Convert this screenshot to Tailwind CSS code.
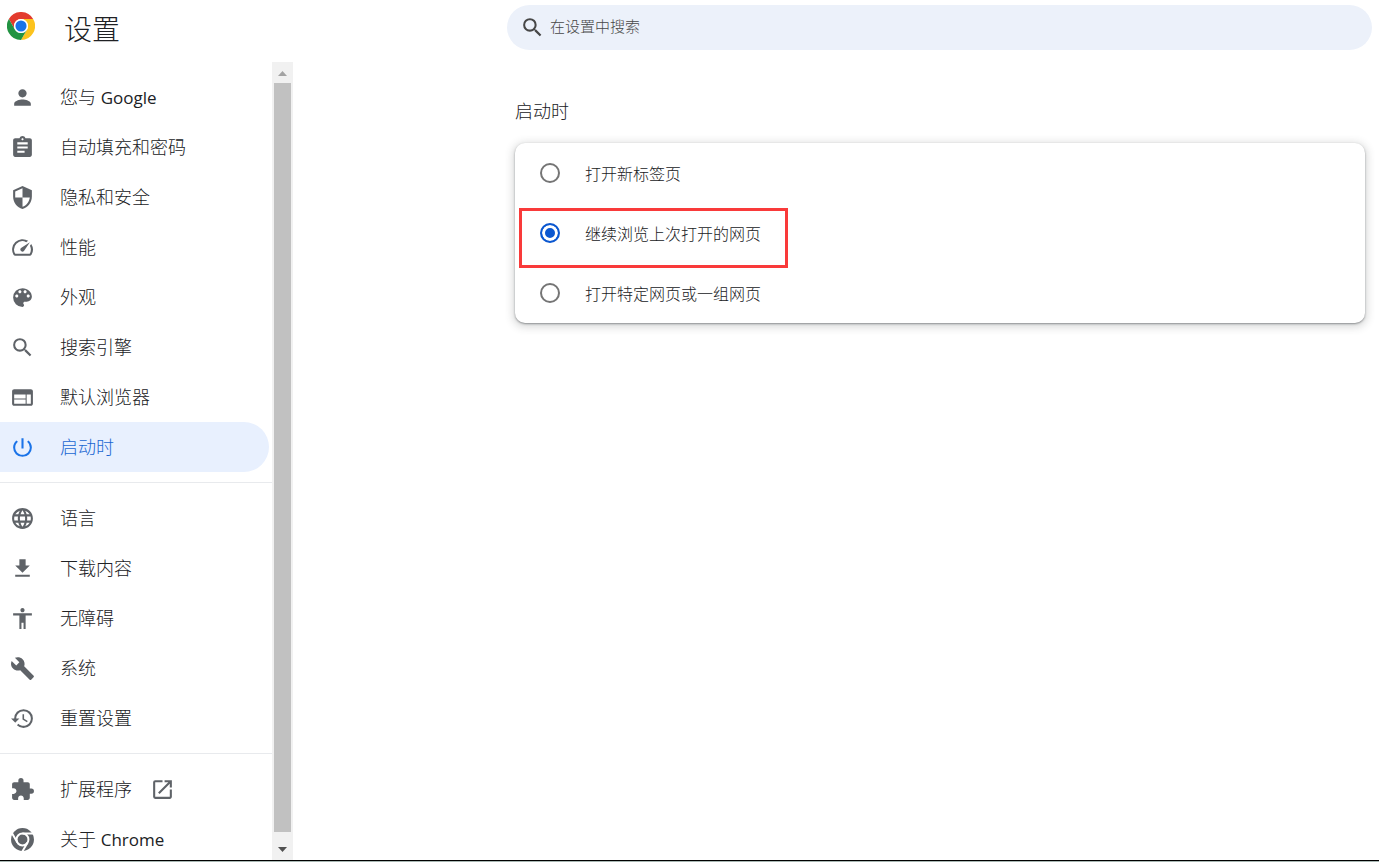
<!DOCTYPE html>
<html lang="zh-CN">
  <head>
    <meta charset="utf-8" />
    <meta name="viewport" content="width=device-width, initial-scale=1" />
    <title>设置</title>
    <script src="https://cdn.jsdelivr.net/npm/@tailwindcss/browser@4"></script>
  </head>
  <body>
    <div
      class="flex h-screen flex-col overflow-hidden bg-white font-['Open_Sans','Noto_Sans_CJK_SC',sans-serif] font-light text-[#202124]"
    >
      <header class="flex h-[62px] shrink-0 items-start pr-[7px]">
        <div class="flex w-[507px] shrink-0 items-center gap-[29px] pl-[7px]">
          <svg class="size-7 -mt-1.5" viewBox="0 0 48 48">
            <path fill="#e33b2e" d="M24 12h20.8A24 24 0 0 0 3.2 12l10.4 18A12 12 0 0 1 24 12z" />
            <path fill="#fcc31e" d="M34.4 30 24 48a24 24 0 0 0 20.8-36H24a12 12 0 0 1 10.4 18z" />
            <path fill="#229342" d="M13.6 30 3.2 12A24 24 0 0 0 24 48l10.4-18a12 12 0 0 1-20.8 0z" />
            <circle cx="24" cy="24" r="12" fill="#fff" />
            <circle cx="24" cy="24" r="9.5" fill="#1a73e8" />
          </svg>
          <h1 class="text-[28px] leading-[58px]">设置</h1>
        </div>
        <label
          class="mt-[5px] flex h-[45px] flex-1 items-center gap-[5px] rounded-full bg-[#ecf1fa] pl-[13px] text-[#474747]"
        >
          <svg class="size-[25px] shrink-0" viewBox="0 0 24 24" fill="currentColor">
            <path d="M15.5 14h-.79l-.28-.27A6.471 6.471 0 0 0 16 9.5 6.5 6.5 0 1 0 9.5 16c1.61 0 3.09-.59 4.23-1.57l.27.28v.79l5 4.99L20.49 19l-4.99-5zm-6 0C7.01 14 5 11.99 5 9.5S7.01 5 9.5 5 14 7.01 14 9.5 11.99 14 9.5 14z" />
          </svg>
          <input
            type="search"
            aria-label="在设置中搜索"
            placeholder="在设置中搜索"
            class="h-full flex-1 bg-transparent pb-1 text-[15px] outline-none placeholder:text-[#474747]"
          />
        </label>
      </header>

      <div class="flex min-h-0 flex-1">
        <aside class="flex w-[293px] shrink-0">
          <nav class="flex-1 overflow-hidden pt-[10px] text-lg text-[#202124]">
            <a href="#people" class="flex h-[50px] items-center gap-[25px] pl-[10px]">
              <svg class="size-[25px] text-[#5f6368]" viewBox="0 0 24 24" fill="currentColor">
                <path d="M12 12c2.21 0 4-1.79 4-4s-1.79-4-4-4-4 1.79-4 4 1.79 4 4 4zm0 2c-2.67 0-8 1.34-8 4v2h16v-2c0-2.66-5.33-4-8-4z" />
              </svg>
              <span>您与 <span class="text-[17px] font-medium">Google</span></span>
            </a>
            <a href="#autofill" class="flex h-[50px] items-center gap-[25px] pl-[10px]">
              <svg class="size-[25px] text-[#5f6368]" viewBox="0 0 24 24" fill="currentColor">
                <path d="M19 3h-4.18C14.4 1.84 13.3 1 12 1c-1.3 0-2.4.84-2.82 2H5c-1.1 0-2 .9-2 2v14c0 1.1.9 2 2 2h14c1.1 0 2-.9 2-2V5c0-1.1-.9-2-2-2zm-7 0c.55 0 1 .45 1 1s-.45 1-1 1-1-.45-1-1 .45-1 1-1zm2 14H7v-2h7v2zm3-4H7v-2h10v2zm0-4H7V7h10v2z" />
              </svg>
              <span>自动填充和密码</span>
            </a>
            <a href="#privacy" class="flex h-[50px] items-center gap-[25px] pl-[10px]">
              <svg class="size-[25px] text-[#5f6368]" viewBox="0 0 24 24" fill="currentColor">
                <path d="M12 1 3 5v6c0 5.55 3.84 10.74 9 12 5.16-1.26 9-6.45 9-12V5l-9-4zm0 10.99h7c-.53 4.12-3.28 7.79-7 8.94V12H5V6.3l7-3.11v8.8z" />
              </svg>
              <span>隐私和安全</span>
            </a>
            <a href="#performance" class="flex h-[50px] items-center gap-[25px] pl-[10px]">
              <svg class="size-[25px] text-[#5f6368]" viewBox="0 0 24 24" fill="currentColor">
                <path d="m20.38 8.57-1.23 1.85a8 8 0 0 1-.22 7.58H5.07A8 8 0 0 1 15.58 6.85l1.85-1.23A10 10 0 0 0 3.35 19a2 2 0 0 0 1.72 1h13.85a2 2 0 0 0 1.74-1 10 10 0 0 0-.27-10.44zm-9.79 6.84a2 2 0 0 0 2.83 0l5.66-8.49-8.49 5.66a2 2 0 0 0 0 2.83z" />
              </svg>
              <span>性能</span>
            </a>
            <a href="#appearance" class="flex h-[50px] items-center gap-[25px] pl-[10px]">
              <svg class="size-[25px] text-[#5f6368]" viewBox="0 0 24 24" fill="currentColor">
                <path d="M12 3a9 9 0 0 0 0 18c.83 0 1.5-.67 1.5-1.5 0-.39-.15-.74-.39-1.01-.23-.26-.38-.61-.38-.99 0-.83.67-1.5 1.5-1.5H16c2.76 0 5-2.24 5-5 0-4.42-4.03-8-9-8zm-5.5 9c-.83 0-1.5-.67-1.5-1.5S5.67 9 6.5 9 8 9.67 8 10.5 7.33 12 6.5 12zm3-4C8.67 8 8 7.33 8 6.5S8.67 5 9.5 5s1.5.67 1.5 1.5S10.33 8 9.5 8zm5 0c-.83 0-1.5-.67-1.5-1.5S13.67 5 14.5 5s1.5.67 1.5 1.5S15.33 8 14.5 8zm3 4c-.83 0-1.5-.67-1.5-1.5S16.67 9 17.5 9s1.5.67 1.5 1.5-.67 1.5-1.5 1.5z" />
              </svg>
              <span>外观</span>
            </a>
            <a href="#search" class="flex h-[50px] items-center gap-[25px] pl-[10px]">
              <svg class="size-[25px] text-[#5f6368]" viewBox="0 0 24 24" fill="currentColor">
                <path d="M15.5 14h-.79l-.28-.27A6.471 6.471 0 0 0 16 9.5 6.5 6.5 0 1 0 9.5 16c1.61 0 3.09-.59 4.23-1.57l.27.28v.79l5 4.99L20.49 19l-4.99-5zm-6 0C7.01 14 5 11.99 5 9.5S7.01 5 9.5 5 14 7.01 14 9.5 11.99 14 9.5 14z" />
              </svg>
              <span>搜索引擎</span>
            </a>
            <a href="#defaultBrowser" class="flex h-[50px] items-center gap-[25px] pl-[10px]">
              <svg class="size-[25px] text-[#5f6368]" viewBox="0 0 24 24" fill="currentColor">
                <path d="M20 4H4c-1.1 0-1.99.9-1.99 2L2 18c0 1.1.9 2 2 2h16c1.1 0 2-.9 2-2V6c0-1.1-.9-2-2-2zm-5 14H4v-4h11v4zm0-5H4V9h11v4zm5 5h-4V9h4v9z" />
              </svg>
              <span>默认浏览器</span>
            </a>
            <a
              href="#onStartup"
              aria-current="page"
              class="mr-[3px] flex h-[50px] items-center gap-[25px] rounded-r-full bg-[#e8f0fe] pl-[10px] text-[#1967d2]"
            >
              <svg class="size-[25px] text-[#1a73e8]" viewBox="0 0 24 24" fill="currentColor">
                <path d="M13 3h-2v10h2V3zm4.83 2.17-1.42 1.42A6.92 6.92 0 0 1 19 12c0 3.87-3.13 7-7 7s-7-3.13-7-7c0-2.19 1.01-4.14 2.58-5.42L6.17 5.17A8.932 8.932 0 0 0 3 12a9 9 0 0 0 18 0c0-2.74-1.23-5.18-3.17-6.83z" />
              </svg>
              <span>启动时</span>
            </a>

            <hr class="my-[10px] border-[#e8eaed]" />

            <a href="#languages" class="flex h-[50px] items-center gap-[25px] pl-[10px]">
              <svg class="size-[25px] text-[#5f6368]" viewBox="0 0 24 24" fill="currentColor">
                <path d="M11.99 2C6.47 2 2 6.48 2 12s4.47 10 9.99 10C17.52 22 22 17.52 22 12S17.52 2 11.99 2zm6.93 6h-2.95a15.65 15.65 0 0 0-1.38-3.56A8.03 8.03 0 0 1 18.92 8zM12 4.04c.83 1.2 1.48 2.53 1.91 3.96h-3.82c.43-1.43 1.08-2.76 1.91-3.96zM4.26 14C4.1 13.36 4 12.69 4 12s.1-1.36.26-2h3.38c-.08.66-.14 1.32-.14 2s.06 1.34.14 2H4.26zm.82 2h2.95c.32 1.25.78 2.45 1.38 3.56A7.987 7.987 0 0 1 5.08 16zm2.95-8H5.08a7.987 7.987 0 0 1 4.33-3.56A15.65 15.65 0 0 0 8.03 8zM12 19.96c-.83-1.2-1.48-2.53-1.91-3.96h3.82c-.43 1.43-1.08 2.76-1.91 3.96zM14.34 14H9.66c-.09-.66-.16-1.32-.16-2s.07-1.35.16-2h4.68c.09.65.16 1.32.16 2s-.07 1.34-.16 2zm.25 5.56c.6-1.11 1.06-2.31 1.38-3.56h2.95a8.03 8.03 0 0 1-4.33 3.56zM16.36 14c.08-.66.14-1.32.14-2s-.06-1.34-.14-2h3.38c.16.64.26 1.31.26 2s-.1 1.36-.26 2h-3.38z" />
              </svg>
              <span>语言</span>
            </a>
            <a href="#downloads" class="flex h-[50px] items-center gap-[25px] pl-[10px]">
              <svg class="size-[25px] text-[#5f6368]" viewBox="0 0 24 24" fill="currentColor">
                <path d="M19 9h-4V3H9v6H5l7 7 7-7zM5 18v2h14v-2H5z" />
              </svg>
              <span>下载内容</span>
            </a>
            <a href="#accessibility" class="flex h-[50px] items-center gap-[25px] pl-[10px]">
              <svg class="size-[25px] text-[#5f6368]" viewBox="0 0 24 24" fill="currentColor">
                <path d="M12 2c1.1 0 2 .9 2 2s-.9 2-2 2-2-.9-2-2 .9-2 2-2zm9 7h-6v13h-2v-6h-2v6H9V9H3V7h18v2z" />
              </svg>
              <span>无障碍</span>
            </a>
            <a href="#system" class="flex h-[50px] items-center gap-[25px] pl-[10px]">
              <svg class="size-[25px] text-[#5f6368]" viewBox="0 0 24 24" fill="currentColor">
                <path d="m22.7 19-9.1-9.1c.9-2.3.4-5-1.5-6.9-2-2-5-2.4-7.4-1.3L9 6 6 9 1.6 4.7C.4 7.1.9 10.1 2.9 12.1c1.9 1.9 4.6 2.4 6.9 1.5l9.1 9.1c.4.4 1 .4 1.4 0l2.3-2.3c.5-.4.5-1.1.1-1.4z" />
              </svg>
              <span>系统</span>
            </a>
            <a href="#reset" class="flex h-[50px] items-center gap-[25px] pl-[10px]">
              <svg class="size-[25px] text-[#5f6368]" viewBox="0 0 24 24" fill="currentColor">
                <path d="M13 3a9 9 0 0 0-9 9H1l3.89 3.89.07.14L9 12H6c0-3.87 3.13-7 7-7s7 3.13 7 7-3.13 7-7 7c-1.93 0-3.68-.79-4.94-2.06l-1.42 1.42A8.954 8.954 0 0 0 13 21a9 9 0 0 0 0-18zm-1 5v5l4.28 2.54.72-1.21-3.5-2.08V8H12z" />
              </svg>
              <span>重置设置</span>
            </a>

            <hr class="my-[10px] border-[#e8eaed]" />

            <a href="#extensions" class="flex h-[50px] items-center gap-[25px] pl-[10px]">
              <svg class="size-[25px] text-[#5f6368]" viewBox="0 0 24 24" fill="currentColor">
                <path d="M20.5 11H19V7c0-1.1-.9-2-2-2h-4V3.5a2.5 2.5 0 0 0-5 0V5H4c-1.1 0-1.99.9-1.99 2v3.8H3.5c1.49 0 2.7 1.21 2.7 2.7s-1.21 2.7-2.7 2.7H2V20c0 1.1.9 2 2 2h3.8v-1.5c0-1.49 1.21-2.7 2.7-2.7s2.7 1.21 2.7 2.7V22H17c1.1 0 2-.9 2-2v-4h1.5a2.5 2.5 0 0 0 0-5z" />
              </svg>
              <span class="-mr-[7px]">扩展程序</span>
              <svg class="size-[25px] text-[#5f6368]" viewBox="0 0 24 24" fill="currentColor">
                <path d="M19 19H5V5h7V3H5a2 2 0 0 0-2 2v14a2 2 0 0 0 2 2h14c1.1 0 2-.9 2-2v-7h-2v7zM14 3v2h3.59l-9.83 9.83 1.41 1.41L19 6.41V10h2V3h-7z" />
              </svg>
            </a>
            <a href="#help" class="flex h-[50px] items-center gap-[25px] pl-[10px]">
              <svg class="size-[25px] text-[#5f6368]" viewBox="0 0 24 24">
                <circle cx="12" cy="12" r="11" fill="currentColor" />
                <circle cx="12" cy="12" r="5.7" fill="none" stroke="#fff" stroke-width="1.9" />
                <path d="M12 6.3h10.5M7.1 14.8 1.8 5.7M16.9 14.8 11.6 24" fill="none" stroke="#fff" stroke-width="1.9" />
              </svg>
              <span>关于 <span class="text-[17px] font-medium">Chrome</span></span>
            </a>
          </nav>

          <!-- scrollbar -->
          <div class="flex w-[21px] flex-col items-center bg-[#f1f1f1]">
            <div class="flex h-[21px] items-end pb-[7px]">
              <svg class="h-[5px] w-[9px]" viewBox="0 0 9 5"><path fill="#a3a3a3" d="M4.5 0 9 5H0z" /></svg>
            </div>
            <div class="w-[17px] flex-1 bg-[#c1c1c1]"></div>
            <div class="flex h-7 items-end pb-2">
              <svg class="h-[5px] w-[9px]" viewBox="0 0 9 5"><path fill="#505050" d="M0 0h9L4.5 5z" /></svg>
            </div>
          </div>
        </aside>

        <main class="flex-1 pr-[14px] pl-[222px]">
          <h2 class="mt-9 mb-[18px] text-lg leading-[27px]">启动时</h2>
          <div
            class="relative rounded-[10px] bg-white text-base shadow-[0_1px_2px_rgba(60,64,67,0.5),0_2px_8px_2px_rgba(60,64,67,0.2)]"
          >
            <label class="flex h-[60px] items-center gap-[25px] pl-[25px]">
              <input
                type="radio"
                name="startup"
                class="size-5 appearance-none rounded-full border-2 border-[#757575] checked:border-[#0b57d0] checked:bg-[#0b57d0] checked:shadow-[inset_0_0_0_3px_#fff]"
              />
              <span class="pt-0.5">打开新标签页</span>
            </label>
            <label class="flex h-[60px] items-center gap-[25px] pl-[25px]">
              <input
                type="radio"
                name="startup"
                checked
                class="size-5 appearance-none rounded-full border-2 border-[#757575] checked:border-[#0b57d0] checked:bg-[#0b57d0] checked:shadow-[inset_0_0_0_3px_#fff]"
              />
              <span class="pt-0.5">继续浏览上次打开的网页</span>
            </label>
            <label class="flex h-[60px] items-center gap-[25px] pl-[25px]">
              <input
                type="radio"
                name="startup"
                class="size-5 appearance-none rounded-full border-2 border-[#757575] checked:border-[#0b57d0] checked:bg-[#0b57d0] checked:shadow-[inset_0_0_0_3px_#fff]"
              />
              <span class="pt-0.5">打开特定网页或一组网页</span>
            </label>
            <!-- highlight around the selected option -->
            <div class="pointer-events-none absolute top-[65px] left-1 h-[60px] w-[269px] border-3 border-[#f93a3a]"></div>
          </div>
        </main>
      </div>

      <footer class="h-[2px] shrink-0 border-t border-black bg-[#a9b8b4]"></footer>
    </div>
  </body>
</html>
